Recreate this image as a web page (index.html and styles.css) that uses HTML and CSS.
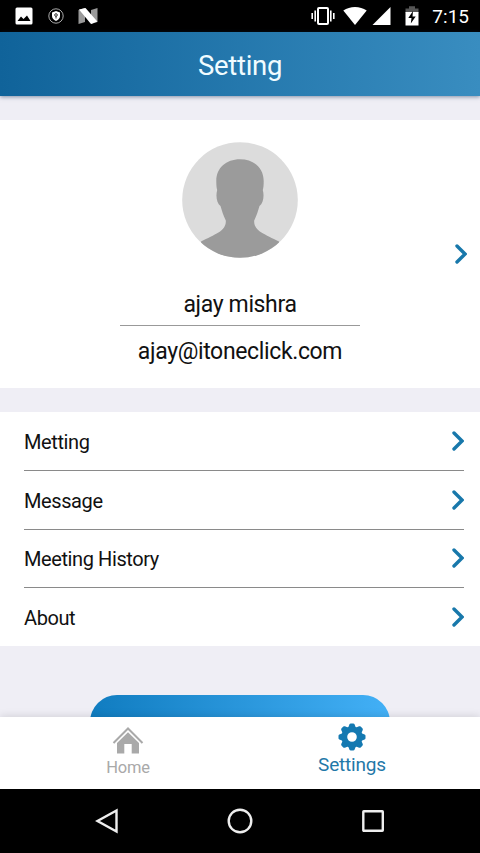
FILE: index.html
```html
<!DOCTYPE html>
<html lang="en">
<head>
  <meta charset="UTF-8" />
  <meta name="viewport" content="width=device-width, initial-scale=1.0"/>
  <title>Setting</title>
  <link rel="stylesheet" href="styles.css">
</head>
<body>
  <div class="screen">
    <!-- Status bar -->
    <div class="status-bar">
      <div class="status-left">
        <svg width="18" height="18" viewBox="0 0 18 18"><rect x="0.5" y="0.5" width="17" height="17" rx="1.5" fill="#fff"/><path d="M2.5 14 L6 9.5 L8.5 12 L12 8.5 L15.5 14 Z" fill="#000"/></svg>
        <svg width="18" height="18" viewBox="0 0 18 18"><circle cx="9" cy="9" r="7.2" fill="none" stroke="#aaa" stroke-width="1"/><path d="M9 4 L13 5.5 V9 Q13 12 9 14 Q5 12 5 9 V5.5 Z" fill="#fff"/><circle cx="9" cy="8" r="1.3" fill="none" stroke="#333"/><path d="M9 9 V11.5" stroke="#333"/></svg>
        <svg width="20" height="18" viewBox="0 0 20 18"><path d="M0.5 3 L7 1 V15 L0.5 17 Z M13 3 L19.5 1 V15 L13 17 Z" fill="#999"/><path d="M1 2.5 L7.5 1 L19.3 14.5 L13 17 Z" fill="#fff"/></svg>
      </div>
      <div class="status-right">
        <svg class="vibrate" width="24" height="20" viewBox="0 0 24 20"><rect x="7" y="2" width="10" height="16" rx="1" fill="none" stroke="#fff" stroke-width="2"/><path d="M4.2 4.5 V15.5 M19.8 4.5 V15.5 M1.2 7 V13 M22.8 7 V13" stroke="#fff" stroke-width="1.6"/></svg>
        <svg class="wifi" width="24" height="20" viewBox="0 0 24 20"><path d="M12 19 L0.3 4.5 Q5.5 1 12 1 Q18.5 1 23.7 4.5 Z" fill="#fff"/></svg>
        <svg class="signal" width="19" height="20" viewBox="0 0 19 20"><path d="M0.5 19 L18.5 1 V19 Z" fill="#fff"/></svg>
        <svg class="battery" width="14" height="20" viewBox="0 0 14 20"><path d="M0.5 7 V2.5 H4 V0.3 H10 V2.5 H13.5 V7 Z" fill="#555"/><path d="M0.5 6 H13.5 V19.5 H0.5 Z" fill="#fff"/><path d="M8 5 L3.3 12 H6.5 L5.8 17.5 L10.7 10.5 H7.5 Z" fill="#000"/></svg>
        <span class="clock">7:15</span>
      </div>
    </div>

    <div class="header">
      <h1>Setting</h1>
    </div>

    <div class="content">
      <div class="profile">
        <svg class="avatar" width="116" height="116" viewBox="0 0 116 116">
          <clipPath id="round"><circle cx="58" cy="58" r="57.8"/></clipPath>
          <g clip-path="url(#round)">
            <rect width="116" height="116" fill="#dcdcdc"/>
            <path d="M58 17.3 C44 17.3 34.3 26 34.3 39 C34.3 43 34.5 46 35.2 48 C33.5 54 34.8 61 38.5 64 C40 69 41 73 43.8 78.5 C44.5 89 33 92 19 99.5 V116 H97 V99.5 C83 92 71.5 89 72.2 78.5 C75 73 76 69 77.5 64 C81.2 61 82.5 54 80.8 48 C81.5 46 81.7 43 81.7 39 C81.7 26 72 17.3 58 17.3 Z" fill="#9b9b9b"/>
          </g>
        </svg>
        <div class="profile-name">ajay mishra</div>
        <div class="profile-email">ajay@itoneclick.com</div>
        <svg class="profile-arrow" width="12" height="20" viewBox="0 0 12 20"><path d="M2 2 L10 10 L2 18"/></svg>
      </div>

      <div class="menu">
        <div class="menu-item">
          <span>Metting</span>
          <svg width="12" height="20" viewBox="0 0 12 20"><path d="M2 2 L10 10 L2 18"/></svg>
        </div>
        <div class="menu-item">
          <span>Message</span>
          <svg width="12" height="20" viewBox="0 0 12 20"><path d="M2 2 L10 10 L2 18"/></svg>
        </div>
        <div class="menu-item">
          <span>Meeting History</span>
          <svg width="12" height="20" viewBox="0 0 12 20"><path d="M2 2 L10 10 L2 18"/></svg>
        </div>
        <div class="menu-item">
          <span>About</span>
          <svg width="12" height="20" viewBox="0 0 12 20"><path d="M2 2 L10 10 L2 18"/></svg>
        </div>
      </div>

      <div class="action-btn"></div>
    </div>

    <!-- Bottom tabs -->
    <div class="tabs">
      <div class="tab">
        <svg width="32" height="28" viewBox="0 0 32 28"><path d="M1.5 17 L16 2.5 L30.5 17" fill="none" stroke="#a9a9a9" stroke-width="2"/><path d="M16 6.2 L27 17 V27.5 H19.7 V18 H12.3 V27.5 H5 V17 Z" fill="#a9a9a9"/></svg>
        <span>Home</span>
      </div>
      <div class="tab active">
        <svg width="28" height="28" viewBox="-14 -14 28 28">
          <g fill="#1479b1">
            <path fill-rule="evenodd" d="M0 -10.5 A10.5 10.5 0 1 0 0 10.5 A10.5 10.5 0 1 0 0 -10.5 Z M0 -4.8 A4.8 4.8 0 1 1 0 4.8 A4.8 4.8 0 1 1 0 -4.8 Z"/>
            <path id="tooth" d="M-4 -9 L-2.6 -12.6 Q-2.2 -13.5 -1.2 -13.5 H1.2 Q2.2 -13.5 2.6 -12.6 L4 -9 Z"/>
            <use href="#tooth" transform="rotate(45)"/>
            <use href="#tooth" transform="rotate(90)"/>
            <use href="#tooth" transform="rotate(135)"/>
            <use href="#tooth" transform="rotate(180)"/>
            <use href="#tooth" transform="rotate(225)"/>
            <use href="#tooth" transform="rotate(270)"/>
            <use href="#tooth" transform="rotate(315)"/>
          </g>
        </svg>
        <span>Settings</span>
      </div>
    </div>

    <div class="nav-bar">
      <svg width="24" height="26" viewBox="0 0 24 26"><path d="M21.5 2.5 V23.5 L2.5 13 Z"/></svg>
      <svg width="26" height="26" viewBox="0 0 26 26"><circle cx="13" cy="13" r="11.3"/></svg>
      <svg width="24" height="26" viewBox="0 0 24 26"><rect x="2.3" y="3.3" width="19.5" height="19.5" rx="0.5"/></svg>
    </div>
  </div>
</body>
</html>
```
FILE: styles.css
```css
* {
  box-sizing: border-box;
}

body {
  margin: 0;
  font-family: Roboto, Arial, sans-serif;
  color: #111;
}

svg {
  display: block;
  flex-shrink: 0;
}

.screen {
  width: 480px;
  height: 853px;
  display: flex;
  flex-direction: column;
  overflow: hidden;
  background: #efeef5;
}

.status-bar {
  height: 32px;
  background: #000;
  display: flex;
  justify-content: space-between;
  align-items: center;
  padding: 0 11px 0 15px;
}

.status-left {
  display: flex;
  gap: 14px;
}

.status-left svg:last-child {
  margin-left: -1px;
}

.status-right {
  display: flex;
  align-items: center;
}

.wifi {
  margin-left: 8px;
}

.signal {
  margin-left: 5px;
}

.battery {
  margin: 0 13px 0 14px;
}

.clock {
  color: #fff;
  font-size: 19px;
  line-height: 32px;
  padding-top: 1px;
}

.header {
  height: 64px;
  background: linear-gradient(90deg, #10639a, #398dc0);
  box-shadow: 0 1px 4px rgba(20,50,90,0.5);
  display: flex;
  justify-content: center;
  align-items: center;
}

.header h1 {
  margin: 0;
  padding-top: 2px;
  font-size: 27.5px;
  font-weight: normal;
  letter-spacing: -0.3px;
  color: #f0fcff;
}

.content {
  flex: 1;
  min-height: 0;
  overflow: hidden;
  padding-top: 24px;
}

.profile {
  position: relative;
  height: 268px;
  padding-top: 22px;
  background: #fff;
  display: flex;
  flex-direction: column;
  align-items: center;
  font-size: 23px;
  letter-spacing: -0.36px;
}

.profile-name {
  width: 240px;
  height: 48px;
  margin-top: 20px;
  padding-top: 13px;
  line-height: 27px;
  text-align: center;
  border-bottom: 1px solid #999;
}

.profile-email {
  margin-top: 12px;
  line-height: 27px;
}

.profile-arrow {
  position: absolute;
  right: 13px;
  top: 124px;
}

.profile-arrow path,
.menu-item path {
  fill: none;
  stroke: #1878ab;
  stroke-width: 3.4;
  stroke-linecap: round;
}

.menu {
  margin-top: 24px;
  height: 234px;
  padding: 0 16px 0 24px;
  background: #fff;
}

.menu-item {
  height: 58.8px;
  display: flex;
  justify-content: space-between;
  align-items: center;
  font-size: 20px;
  letter-spacing: -0.4px;
  border-bottom: 1px solid #8a8a8a;
}

.menu-item span {
  padding-top: 2px;
}

.menu-item:last-child {
  height: 57.6px;
  border-bottom: none;
}

.action-btn {
  width: 300px;
  height: 60px;
  margin: 49px auto 0;
  border-radius: 27px;
  background: linear-gradient(90deg, #107cc0, #43b0f6);
}

.tabs {
  position: relative;
  height: 72px;
  background: #fff;
  box-shadow: 0 -1px 8px rgba(0,0,0,0.12);
  display: flex;
  padding: 0 16px;
}

.tab {
  flex: 1;
  display: flex;
  flex-direction: column;
  align-items: center;
  padding-top: 9px;
  color: #a9a9a9;
  font-size: 16.5px;
  line-height: 20px;
  letter-spacing: -0.2px;
}

.tab span {
  margin-top: 4px;
}

.tab.active {
  padding-top: 6px;
  color: #1f78a8;
  font-size: 19px;
}

.nav-bar {
  height: 64px;
  background: #000;
  display: flex;
  justify-content: space-between;
  align-items: center;
  padding: 0 95px;
}

.nav-bar svg {
  fill: none;
  stroke: #eee;
  stroke-width: 2.4;
}
```
